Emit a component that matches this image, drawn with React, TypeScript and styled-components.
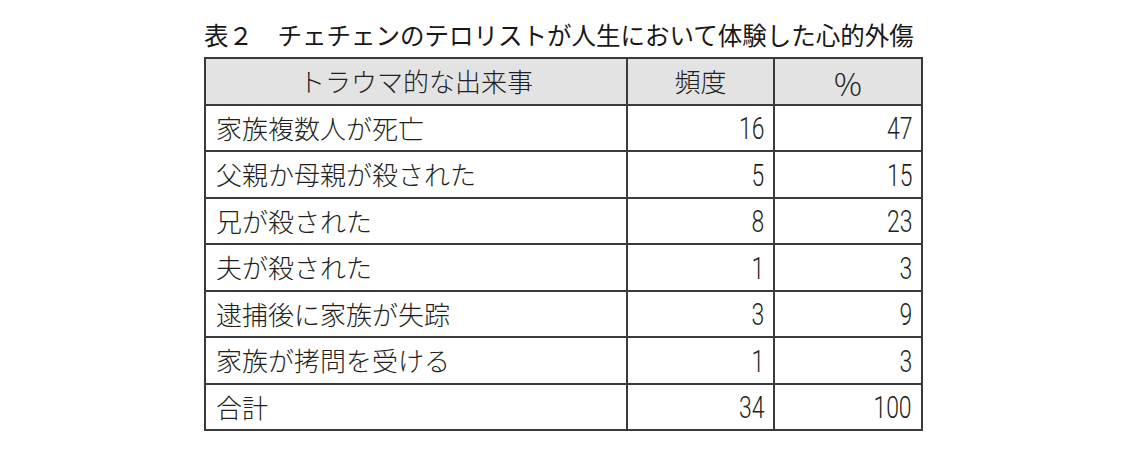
import React from "react";
import styled, { createGlobalStyle } from "styled-components";

const Global = createGlobalStyle`
  html, body { margin: 0; padding: 0; background: #ffffff; }
  body { font-family: "Noto Sans CJK JP", "Noto Sans", sans-serif; color: #231f20; }
`;

const Page = styled.div`
  width: 1140px;
  height: 464px;
  box-sizing: border-box;
  padding: 18px 0 0 204px;
  display: flex;
  flex-direction: column;
  align-items: flex-start;
`;

const Title = styled.h1`
  margin: 0 0 5px 0;
  font-size: 24.5px;
  line-height: 34px;
  font-weight: 400;
  letter-spacing: 0;
  color: #1a1718;
  white-space: pre;
`;

const Table = styled.table`
  border-collapse: collapse;
  table-layout: fixed;
  width: 717px;
`;

const Row = styled.tr`
  height: 46.5px;
`;

const HeadCell = styled.th`
  border: 2px solid #3a3a3a;
  background: #e3e3e3;
  font-weight: 300;
  font-size: 26px;
  text-align: center;
  padding: 0;
  line-height: 1;
  color: #231f20;
`;

const Cell = styled.td<{ $num?: boolean }>`
  border: 2px solid #3a3a3a;
  padding: 0 ${(p) => (p.$num ? "9px" : "0")} 0 ${(p) => (p.$num ? "0" : "10px")};
  text-align: ${(p) => (p.$num ? "right" : "left")};
  font-size: 26px;
  font-weight: 300;
  line-height: 1;
  color: #231f20;
  white-space: nowrap;
`;

const Num = styled.span`
  display: inline-block;
  font-family: "Roboto", "Noto Sans", sans-serif;
  font-weight: 300;
  font-size: 31px;
  transform: scaleX(0.74);
  transform-origin: right center;
  position: relative;
  top: 1px;
`;

const Pct = styled.span`
  display: inline-block;
  font-weight: 300;
  font-size: 31px;
  position: relative;
  top: 1px;
`;

const rows: [string, number, number][] = [
  ["家族複数人が死亡", 16, 47],
  ["父親か母親が殺された", 5, 15],
  ["兄が殺された", 8, 23],
  ["夫が殺された", 1, 3],
  ["逮捕後に家族が失踪", 3, 9],
  ["家族が拷問を受ける", 1, 3],
  ["合計", 34, 100],
];

export default function App() {
  return (
    <>
      <Global />
      <Page>
        <Title>{"表２　チェチェンのテロリストが人生において体験した心的外傷"}</Title>
        <Table>
          <colgroup>
            <col style={{ width: 422 }} />
            <col style={{ width: 147 }} />
            <col style={{ width: 148 }} />
          </colgroup>
          <thead>
            <Row>
              <HeadCell>トラウマ的な出来事</HeadCell>
              <HeadCell>頻度</HeadCell>
              <HeadCell>
                <Pct>%</Pct>
              </HeadCell>
            </Row>
          </thead>
          <tbody>
            {rows.map(([label, freq, pct]) => (
              <Row key={label}>
                <Cell>{label}</Cell>
                <Cell $num>
                  <Num>{freq}</Num>
                </Cell>
                <Cell $num>
                  <Num>{pct}</Num>
                </Cell>
              </Row>
            ))}
          </tbody>
        </Table>
      </Page>
    </>
  );
}
